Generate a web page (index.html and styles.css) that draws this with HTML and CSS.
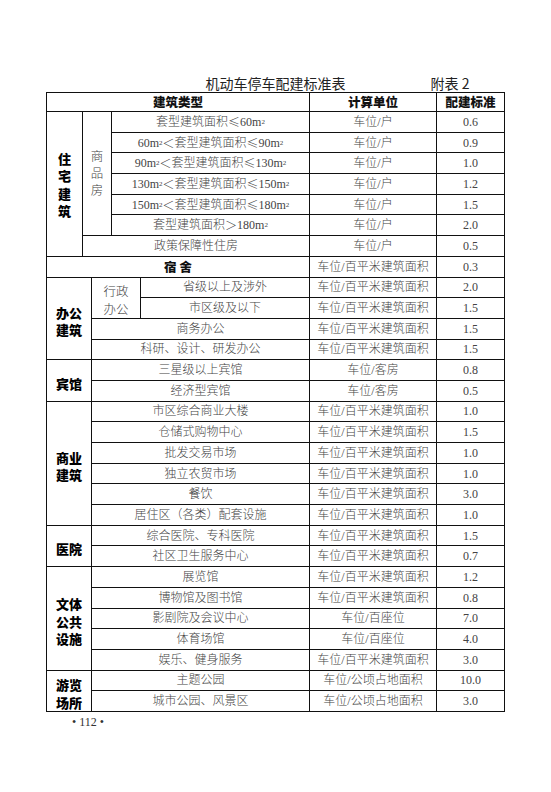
FILE: index.html
```html
<!DOCTYPE html>
<html lang="zh-CN">
<head>
<meta charset="utf-8">
<title>机动车停车配建标准表</title>
<link rel="stylesheet" href="styles.css">
</head>
<body>
<div class="page">
  <div class="titlebar">
    <div></div>
    <div class="title">机动车停车配建标准表</div>
    <div class="annex">附表 2</div>
  </div>
  <div class="grid">
    <div class="cell hd l15">建筑类型</div>
    <div class="cell hd u">计算单位</div>
    <div class="cell hd v">配建标准</div>

    <div class="cell lab l1 r7 vert">住<br>宅<br>建<br>筑</div>
    <div class="cell sub l23 r6 vsub">商<br>品<br>房</div>
    <div class="cell l45">套型建筑面积<span class="cj">≤</span>60m<sup>2</sup></div>
    <div class="cell u">车位/户</div>
    <div class="cell v">0.6</div>

    <div class="cell l45">60m<sup>2</sup><span class="cj">＜</span>套型建筑面积<span class="cj">≤</span>90m<sup>2</sup></div>
    <div class="cell u">车位/户</div>
    <div class="cell v">0.9</div>

    <div class="cell l45">90m<sup>2</sup><span class="cj">＜</span>套型建筑面积<span class="cj">≤</span>130m<sup>2</sup></div>
    <div class="cell u">车位/户</div>
    <div class="cell v">1.0</div>

    <div class="cell l45">130m<sup>2</sup><span class="cj">＜</span>套型建筑面积<span class="cj">≤</span>150m<sup>2</sup></div>
    <div class="cell u">车位/户</div>
    <div class="cell v">1.2</div>

    <div class="cell l45">150m<sup>2</sup><span class="cj">＜</span>套型建筑面积<span class="cj">≤</span>180m<sup>2</sup></div>
    <div class="cell u">车位/户</div>
    <div class="cell v">1.5</div>

    <div class="cell l45">套型建筑面积<span class="cj">＞</span>180m<sup>2</sup></div>
    <div class="cell u">车位/户</div>
    <div class="cell v">2.0</div>

    <div class="cell l25">政策保障性住房</div>
    <div class="cell u">车位/户</div>
    <div class="cell v">0.5</div>

    <div class="cell hd l15">宿&nbsp;舍</div>
    <div class="cell u">车位/百平米建筑面积</div>
    <div class="cell v">0.3</div>

    <div class="cell lab l12 r4">办公<br>建筑</div>
    <div class="cell sub l34 r2">行政<br>办公</div>
    <div class="cell l5">省级以上及涉外</div>
    <div class="cell u">车位/百平米建筑面积</div>
    <div class="cell v">2.0</div>

    <div class="cell l5">市区级及以下</div>
    <div class="cell u">车位/百平米建筑面积</div>
    <div class="cell v">1.5</div>

    <div class="cell l35">商务办公</div>
    <div class="cell u">车位/百平米建筑面积</div>
    <div class="cell v">1.5</div>

    <div class="cell l35">科研、设计、研发办公</div>
    <div class="cell u">车位/百平米建筑面积</div>
    <div class="cell v">1.5</div>

    <div class="cell lab l12 r2">宾馆</div>
    <div class="cell l35">三星级以上宾馆</div>
    <div class="cell u">车位/客房</div>
    <div class="cell v">0.8</div>

    <div class="cell l35">经济型宾馆</div>
    <div class="cell u">车位/客房</div>
    <div class="cell v">0.5</div>

    <div class="cell lab l12 r6">商业<br>建筑</div>
    <div class="cell l35">市区综合商业大楼</div>
    <div class="cell u">车位/百平米建筑面积</div>
    <div class="cell v">1.0</div>

    <div class="cell l35">仓储式购物中心</div>
    <div class="cell u">车位/百平米建筑面积</div>
    <div class="cell v">1.5</div>

    <div class="cell l35">批发交易市场</div>
    <div class="cell u">车位/百平米建筑面积</div>
    <div class="cell v">1.0</div>

    <div class="cell l35">独立农贸市场</div>
    <div class="cell u">车位/百平米建筑面积</div>
    <div class="cell v">1.0</div>

    <div class="cell l35">餐饮</div>
    <div class="cell u">车位/百平米建筑面积</div>
    <div class="cell v">3.0</div>

    <div class="cell l35">居住区（各类）配套设施</div>
    <div class="cell u">车位/百平米建筑面积</div>
    <div class="cell v">1.0</div>

    <div class="cell lab l12 r2">医院</div>
    <div class="cell l35">综合医院、专科医院</div>
    <div class="cell u">车位/百平米建筑面积</div>
    <div class="cell v">1.5</div>

    <div class="cell l35">社区卫生服务中心</div>
    <div class="cell u">车位/百平米建筑面积</div>
    <div class="cell v">0.7</div>

    <div class="cell lab l12 r5">文体<br>公共<br>设施</div>
    <div class="cell l35">展览馆</div>
    <div class="cell u">车位/百平米建筑面积</div>
    <div class="cell v">1.2</div>

    <div class="cell l35">博物馆及图书馆</div>
    <div class="cell u">车位/百平米建筑面积</div>
    <div class="cell v">0.8</div>

    <div class="cell l35">影剧院及会议中心</div>
    <div class="cell u">车位/百座位</div>
    <div class="cell v">7.0</div>

    <div class="cell l35">体育场馆</div>
    <div class="cell u">车位/百座位</div>
    <div class="cell v">4.0</div>

    <div class="cell l35">娱乐、健身服务</div>
    <div class="cell u">车位/百平米建筑面积</div>
    <div class="cell v">3.0</div>

    <div class="cell lab l12 r2">游览<br>场所</div>
    <div class="cell l35">主题公园</div>
    <div class="cell u">车位/公顷占地面积</div>
    <div class="cell v">10.0</div>

    <div class="cell l35">城市公园、风景区</div>
    <div class="cell u">车位/公顷占地面积</div>
    <div class="cell v">3.0</div>
  </div>
  <div class="pageno">• 112 •</div>
</div>
</body>
</html>
```
FILE: styles.css
```css
html, body {
  margin: 0;
  padding: 0;
  background: #ffffff;
}

.page {
  width: 551px;
  height: 792px;
  padding-top: 74px;
  box-sizing: border-box;
}

.titlebar {
  margin-left: 46px;
  width: 459px;
  height: 18px;
  display: grid;
  grid-template-columns: 1fr auto 1fr;
  font-family: "Noto Sans CJK SC", sans-serif;
  font-size: 14px;
  line-height: 18px;
  color: #222;
}

.annex {
  padding-left: 85px;
  white-space: nowrap;
}

.grid {
  margin-left: 46px;
  width: 459px;
  box-sizing: border-box;
  padding: 1px;
  gap: 1px;
  background: #111;
  display: grid;
  grid-template-columns: 35px 8px 19px 28px 168px 126px 67px;
  grid-template-rows: 18px repeat(29, 19.7px);
}

.cell {
  background: #fff;
  display: flex;
  align-items: center;
  justify-content: center;
  text-align: center;
  font-family: "Liberation Serif", "Noto Sans CJK SC", serif;
  font-weight: 300;
  font-size: 12px;
  line-height: 14px;
  color: #444;
  white-space: nowrap;
}

.cell sup {
  font-size: 7px;
  line-height: 0;
  vertical-align: 5px;
}

.cj {
  font-family: "Noto Sans CJK SC", sans-serif;
  font-weight: 300;
}

.hd {
  font-family: "Noto Sans CJK SC", sans-serif;
  font-weight: 900;
  font-size: 12.5px;
  color: #111;
}

.lab {
  font-family: "Noto Sans CJK SC", sans-serif;
  font-weight: 900;
  font-size: 13px;
  line-height: 17.5px;
  color: #000;
  padding-top: 6px;
  box-sizing: border-box;
}

.vert {
  padding-top: 2px;
}

.sub {
  font-size: 12.5px;
  line-height: 18px;
  padding-top: 6px;
  box-sizing: border-box;
}

.vsub {
  line-height: 17px;
  padding-top: 1px;
}

.l1 { grid-column: 1 / 2; }
.l12 { grid-column: 1 / 3; }
.l15 { grid-column: 1 / 6; }
.l23 { grid-column: 2 / 4; }
.l25 { grid-column: 2 / 6; }
.l34 { grid-column: 3 / 5; }
.l35 { grid-column: 3 / 6; }
.l45 { grid-column: 4 / 6; }
.l5 { grid-column: 5 / 6; }
.u { grid-column: 6 / 7; }
.v { grid-column: 7 / 8; }

.r2 { grid-row: span 2; }
.r4 { grid-row: span 4; }
.r5 { grid-row: span 5; }
.r6 { grid-row: span 6; }
.r7 { grid-row: span 7; }

.pageno {
  margin-top: 2px;
  margin-left: 72px;
  font-family: "Liberation Serif", serif;
  font-size: 12px;
  line-height: 16px;
  color: #333;
}
```
